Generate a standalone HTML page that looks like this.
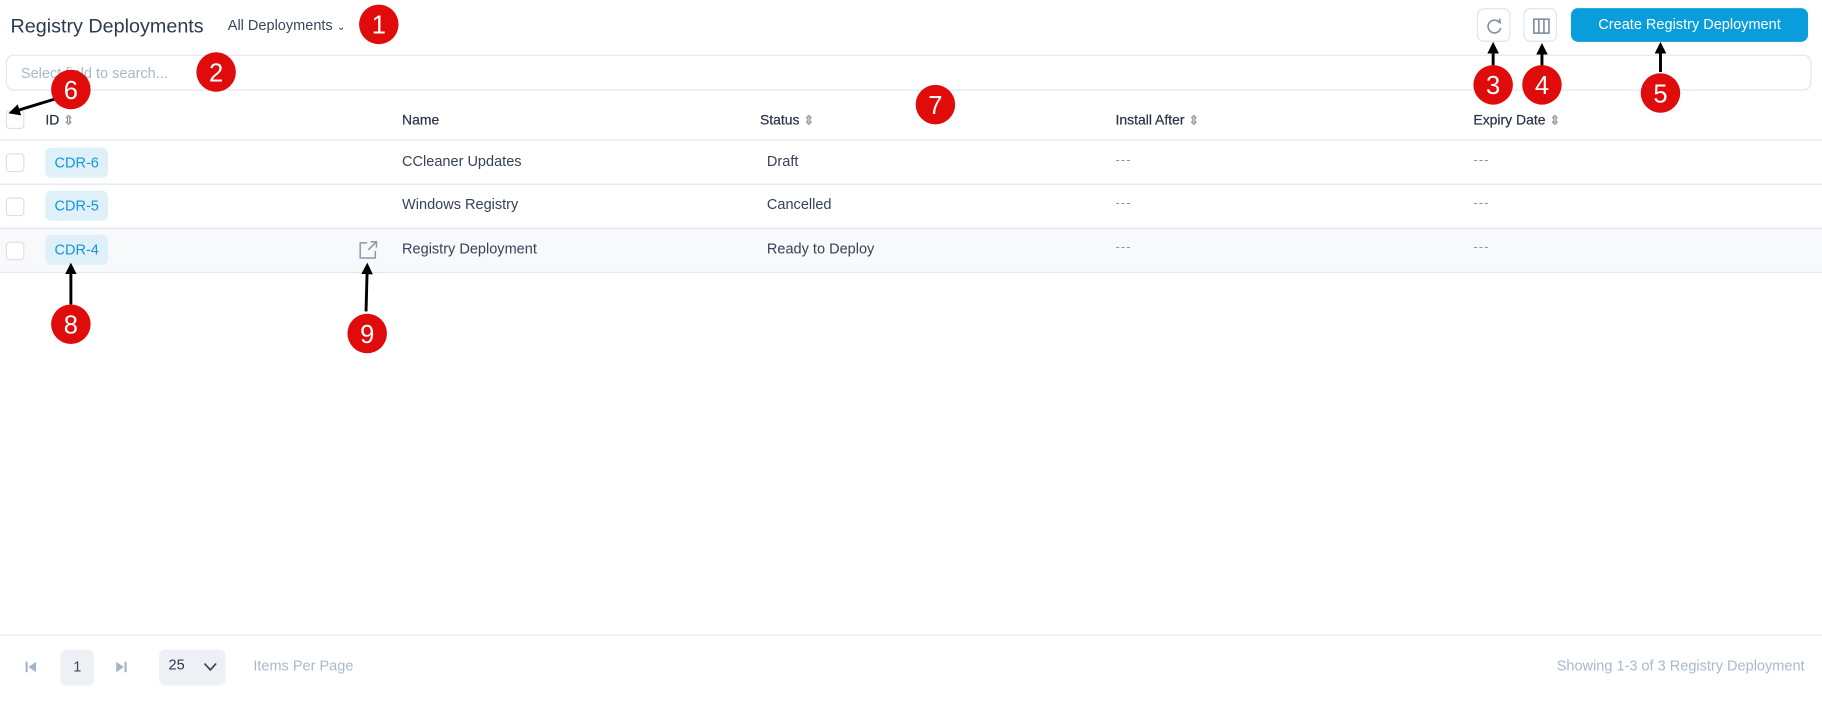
<!DOCTYPE html>
<html><head><meta charset="utf-8"><style>
*{box-sizing:border-box;margin:0;padding:0}
html,body{width:1822px;height:703px;overflow:hidden;background:#fff}
#p{position:absolute;left:0;top:0;width:1568px;height:605px;transform:scale(1.16199);transform-origin:0 0;font-family:"Liberation Sans",sans-serif;color:#2f3b50}
.a{position:absolute;white-space:nowrap}
.h{font-size:12px;color:#2a3548;top:96px;-webkit-text-stroke:0.2px #2a3548}
.t{font-size:12.5px;color:#364256}
.line{position:absolute;left:0;width:1568px;height:1px;background:#e1e6ee}
.cb{position:absolute;left:5px;width:16px;height:16px;border:1px solid #dbe1e8;border-radius:3px;background:#fff}
.bd{position:absolute;left:39px;width:54px;height:26px;border-radius:5px;background:#dff0f9;color:#1397d5;font-size:12.5px;text-align:center;line-height:26px}
.ib{position:absolute;top:7px;width:29px;height:29px;border:1px solid #dfe4ec;border-radius:6px;background:#fff}
.dash{color:#8b96a6;font-size:11px;letter-spacing:1px}
.s{color:#b8c0cb;font-size:11px}
</style></head><body><div id="p">
<div class="a" style="left:9px;top:13px;font-size:17px;color:#2d3a4f">Registry Deployments</div>
<div class="a" style="left:196px;top:15px;font-size:12.5px;color:#3a465a">All Deployments <span style="font-size:9px">&#8964;</span></div>
<div class="ib" style="left:1271px"><svg width="29" height="29" viewBox="0 0 29 29"><path d="M18.5 11.5 A5.5 5.5 0 1 0 19.5 16" fill="none" stroke="#8090a6" stroke-width="1.4"/><path d="M16 9.5 L19 11.5 L18.5 8" fill="none" stroke="#8090a6" stroke-width="1.4"/></svg></div>
<div class="ib" style="left:1311px"><svg width="29" height="29" viewBox="0 0 29 29"><rect x="8" y="8.5" width="13" height="12" fill="none" stroke="#7f8fa5" stroke-width="1.4"/><path d="M12.3 8.5V20.5M16.7 8.5V20.5" stroke="#7f8fa5" stroke-width="1.4"/></svg></div>
<div class="a" style="left:1352px;top:7px;width:204px;height:29px;border-radius:6px;background:#0a9ddb;color:#fff;font-size:12.5px;text-align:center;line-height:29px">Create Registry Deployment</div>
<div class="a" style="left:5px;top:47px;width:1554px;height:31px;border:1px solid #dfe5ee;border-radius:7px"></div>
<div class="a" style="left:18px;top:56px;font-size:12.5px;color:#aab7c8">Select field to search...</div>

<div class="cb" style="top:95px"></div>
<div class="a h" style="left:39px">ID <span class="s">&#8661;</span></div>
<div class="a h" style="left:346px">Name</div>
<div class="a h" style="left:654px">Status <span class="s">&#8661;</span></div>
<div class="a h" style="left:960px">Install After <span class="s">&#8661;</span></div>
<div class="a h" style="left:1268px">Expiry Date <span class="s">&#8661;</span></div>
<div class="line" style="top:120px"></div>
<div class="line" style="top:158px"></div>
<div class="a" style="left:0;top:197px;width:1568px;height:37px;background:#f7f9fb"></div>
<div class="line" style="top:196px"></div>
<div class="line" style="top:234px"></div>

<div class="cb" style="top:132px"></div><div class="bd" style="top:127px">CDR-6</div>
<div class="a t" style="left:346px;top:132px">CCleaner Updates</div>
<div class="a t" style="left:660px;top:132px">Draft</div>
<div class="a dash" style="left:960px;top:132px">---</div><div class="a dash" style="left:1268px;top:132px">---</div>

<div class="cb" style="top:170px"></div><div class="bd" style="top:164px">CDR-5</div>
<div class="a t" style="left:346px;top:169px">Windows Registry</div>
<div class="a t" style="left:660px;top:169px">Cancelled</div>
<div class="a dash" style="left:960px;top:169px">---</div><div class="a dash" style="left:1268px;top:169px">---</div>

<div class="cb" style="top:208px"></div><div class="bd" style="top:202px">CDR-4</div>
<svg class="a" style="left:308px;top:206px" width="18" height="18" viewBox="0 0 18 18"><path d="M8 3H2V16H15V10" fill="none" stroke="#8a99ad" stroke-width="1.3"/><path d="M9 9L16 2M11 2H16V7" fill="none" stroke="#8a99ad" stroke-width="1.3"/></svg>
<div class="a t" style="left:346px;top:207px">Registry Deployment</div>
<div class="a t" style="left:660px;top:207px">Ready to Deploy</div>
<div class="a dash" style="left:960px;top:207px">---</div><div class="a dash" style="left:1268px;top:207px">---</div>

<div class="line" style="top:546px"></div>
<svg class="a" style="left:21px;top:568px" width="12" height="12" viewBox="0 0 12 12"><rect x="1" y="1.5" width="1.8" height="9" fill="#a5b4c8"/><path d="M10 1.5V10.5L3.5 6Z" fill="#a5b4c8"/></svg>
<div class="a" style="left:52px;top:559px;width:29px;height:31px;border-radius:5px;background:#edf1f5;text-align:center;line-height:31px;font-size:12.5px;color:#3a465a">1</div>
<svg class="a" style="left:98px;top:568px" width="12" height="12" viewBox="0 0 12 12"><path d="M2 1.5V10.5L8.5 6Z" fill="#a5b4c8"/><rect x="9.2" y="1.5" width="1.8" height="9" fill="#a5b4c8"/></svg>
<div class="a" style="left:137px;top:559px;width:57px;height:31px;border-radius:5px;background:#edf1f5"></div>
<div class="a" style="left:145px;top:565px;font-size:12.5px;color:#2f3b50">25</div>
<svg class="a" style="left:175px;top:569px" width="12" height="10" viewBox="0 0 12 10"><path d="M1 2L6 7.5L11 2" fill="none" stroke="#2f3b50" stroke-width="1.4"/></svg>
<div class="a" style="left:218px;top:566px;font-size:12.5px;color:#a9b8cc">Items Per Page</div>
<div class="a" style="right:15px;top:566px;font-size:12.5px;color:#a9b8cc">Showing 1-3 of 3 Registry Deployment</div>

<svg class="a" style="left:0;top:0" width="1568" height="605" viewBox="0 0 1568 605">
<defs><marker id="ar" markerWidth="4" markerHeight="4" refX="2" refY="2" orient="auto"><path d="M0 0L4 2L0 4Z" fill="#000"/></marker></defs>
<g stroke="#000" stroke-width="2.5" marker-end="url(#ar)">
<line x1="1285" y1="57" x2="1285" y2="41"/>
<line x1="1327" y1="57" x2="1327" y2="42"/>
<line x1="1429" y1="62" x2="1429" y2="41"/>
<line x1="48" y1="85" x2="12" y2="96"/>
<line x1="61" y1="262" x2="61" y2="231"/>
<line x1="315" y1="268" x2="316" y2="231"/>
</g>
<g fill="#e00b0b" font-family="Liberation Sans,sans-serif" font-size="22" text-anchor="middle">
<circle cx="326" cy="21" r="17"/><circle cx="186" cy="62" r="17"/><circle cx="1285" cy="73" r="17"/><circle cx="1327" cy="73" r="17"/><circle cx="1429" cy="80" r="17"/><circle cx="61" cy="77" r="17"/><circle cx="805" cy="90" r="17"/><circle cx="61" cy="279" r="17"/><circle cx="316" cy="287" r="17"/>
<g fill="#fff"><text x="326" y="29">1</text><text x="186" y="70">2</text><text x="1285" y="81">3</text><text x="1327" y="81">4</text><text x="1429" y="88">5</text><text x="61" y="85">6</text><text x="805" y="98">7</text><text x="61" y="287">8</text><text x="316" y="295">9</text></g>
</g>
</svg>
</div></body></html>
